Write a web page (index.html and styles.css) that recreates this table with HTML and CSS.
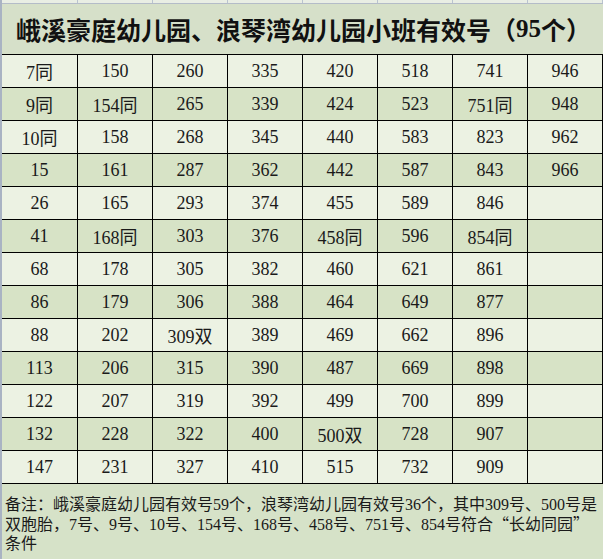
FILE: index.html
```html
<!DOCTYPE html>
<html lang="zh-CN">
<head>
<meta charset="utf-8">
<title>小班有效号</title>
<link rel="stylesheet" href="styles.css">
</head>
<body>
<div class="sheet">
  <div class="strip"><span></span><span></span><span></span><span></span><span></span><span></span><span></span><span></span></div>
  <div class="title">峨溪豪庭幼儿园、浪琴湾幼儿园小班有效号（<span class="lat">95</span>个）</div>
  <div class="table">
    <div class="row"><div>7同</div><div>150</div><div>260</div><div>335</div><div>420</div><div>518</div><div>741</div><div>946</div></div>
    <div class="row"><div>9同</div><div>154同</div><div>265</div><div>339</div><div>424</div><div>523</div><div>751同</div><div>948</div></div>
    <div class="row"><div>10同</div><div>158</div><div>268</div><div>345</div><div>440</div><div>583</div><div>823</div><div>962</div></div>
    <div class="row"><div>15</div><div>161</div><div>287</div><div>362</div><div>442</div><div>587</div><div>843</div><div>966</div></div>
    <div class="row"><div>26</div><div>165</div><div>293</div><div>374</div><div>455</div><div>589</div><div>846</div><div></div></div>
    <div class="row"><div>41</div><div>168同</div><div>303</div><div>376</div><div>458同</div><div>596</div><div>854同</div><div></div></div>
    <div class="row"><div>68</div><div>178</div><div>305</div><div>382</div><div>460</div><div>621</div><div>861</div><div></div></div>
    <div class="row"><div>86</div><div>179</div><div>306</div><div>388</div><div>464</div><div>649</div><div>877</div><div></div></div>
    <div class="row"><div>88</div><div>202</div><div>309双</div><div>389</div><div>469</div><div>662</div><div>896</div><div></div></div>
    <div class="row"><div>113</div><div>206</div><div>315</div><div>390</div><div>487</div><div>669</div><div>898</div><div></div></div>
    <div class="row"><div>122</div><div>207</div><div>319</div><div>392</div><div>499</div><div>700</div><div>899</div><div></div></div>
    <div class="row"><div>132</div><div>228</div><div>322</div><div>400</div><div>500双</div><div>728</div><div>907</div><div></div></div>
    <div class="row"><div>147</div><div>231</div><div>327</div><div>410</div><div>515</div><div>732</div><div>909</div><div></div></div>
  </div>
  <div class="note">
    <span class="line">备注：峨溪豪庭幼儿园有效号59个，浪琴湾幼儿园有效号36个，其中309号、500号是</span>
    <span class="line">双胞胎，7号、9号、10号、154号、168号、458号、751号、854号符合<span class="cjk">“</span>长幼同园<span class="cjk">”</span></span>
    <span class="line">条件</span>
  </div>
</div>
</body>
</html>
```

FILE: styles.css
```css
html, body {
  margin: 0;
  padding: 0;
  background: #d6e2c8;
}

.sheet {
  width: 601px;
  height: 559px;
  border-left: 2px solid #a9b3c3;
  display: flex;
  flex-direction: column;
  color: #141414;
}

.strip {
  height: 3px;
  display: grid;
  grid-template-columns: 76px repeat(7, 75px);
  background: #e9eee4;
  border-bottom: 1px solid #b4bcc8;
}

.strip span {
  border-right: 1px solid #b9c3cf;
}

.title {
  height: 50px;
  display: flex;
  align-items: center;
  padding-left: 14px;
  background: #d6e0c9;
  font-family: "Noto Sans CJK SC", sans-serif;
  font-weight: 700;
  font-size: 25px;
  color: #111;
  white-space: nowrap;
}

.title .lat {
  font-family: "Liberation Serif", serif;
  font-weight: 700;
}

.table {
  border-top: 1px solid #000;
}

.row {
  display: grid;
  grid-template-columns: 76px repeat(7, 75px);
  height: 33px;
  box-sizing: border-box;
  border-bottom: 1px solid #000;
  background: #ecf2e3;
}

.row:nth-child(even) {
  background: #d7e3c6;
}

.row div {
  border-right: 1px solid #000;
  display: flex;
  align-items: center;
  justify-content: center;
  font-family: "Liberation Serif", "Noto Sans CJK SC", serif;
  font-size: 18px;
  color: #1a1a1a;
}

.note {
  flex: 1;
  background: #d6e2c8;
  padding: 11px 0 0 3px;
  font-family: "Liberation Serif", "Noto Sans CJK SC", serif;
  font-size: 16px;
  line-height: 19px;
  color: #1a1a1a;
}

.note .line {
  display: block;
  white-space: nowrap;
}

.note .cjk {
  font-family: "Noto Sans CJK SC", sans-serif;
}
```
